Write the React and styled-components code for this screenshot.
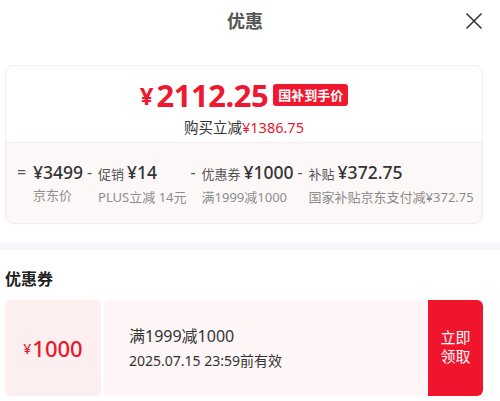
import React from 'react';
import styled, { createGlobalStyle } from 'styled-components';

const GlobalStyle = createGlobalStyle`
  body {
    margin: 0;
    background: #fff;
    font-family: "Noto Sans", "Noto Sans CJK SC", sans-serif;
    color: #333;
  }
`;

const Page = styled.div`
  width: 500px;
  height: 401px;
  overflow: hidden;
`;

const Header = styled.div`
  height: 40px;
  display: flex;
  align-items: center;
  justify-content: center;
  position: relative;
`;

const Title = styled.div`
  font-size: 18px;
  font-weight: 700;
  color: #555;
  margin-left: -10px;
`;

const Close = styled.button`
  position: absolute;
  right: 17px;
  top: 12px;
  width: 18px;
  height: 18px;
  padding: 0;
  border: 0;
  background: none;
  display: flex;
`;

const Section = styled.div`
  padding: 0 17px 0 5px;
`;

const PriceCard = styled.div`
  margin-top: 25px;
  border: 1px solid #eeeeee;
  border-radius: 8px;
  overflow: hidden;
`;

const Top = styled.div`
  padding: 11px 0 5px;
  display: flex;
  flex-direction: column;
  align-items: center;
`;

const PriceLine = styled.div`
  display: flex;
  align-items: center;
  height: 36px;
  color: #f0182e;
  font-weight: 700;
`;

const Yen = styled.span`
  font-size: ${(p) => p.size || 24}px;
  margin-right: ${(p) => p.gap || 3}px;
`;

const Big = styled.span`
  font-size: 31px;
  letter-spacing: -0.5px;
`;

const Badge = styled.span`
  margin-left: 5px;
  background: #f0182e;
  color: #fff;
  font-size: 13px;
  font-weight: 700;
  line-height: 22px;
  padding: 0 5px;
  border-radius: 3px;
`;

const Sub = styled.div`
  margin-top: 4px;
  line-height: 20px;
  font-size: 14.5px;
  color: #333;
`;

const Red = styled.span`
  color: #e8182c;
`;

const Bottom = styled.div`
  background: #fdf8f8;
  border-top: 1px solid #f8ecec;
  padding: 18px 0 17px 11px;
  display: flex;
  gap: 4px;
`;

const Col = styled.div`
  display: flex;
`;

const Op = styled.span`
  width: ${(p) => p.w}px;
  flex-shrink: 0;
  font-size: 16px;
  line-height: 22px;
  color: #555;
`;

const Stack = styled.div`
  display: flex;
  flex-direction: column;
  gap: 3px;
`;

const Value = styled.div`
  line-height: 22px;
  font-size: 17.5px;
  font-weight: 500;
  color: #333;
  white-space: nowrap;
`;

const Tag = styled.span`
  font-size: 13px;
  font-weight: 400;
  color: #555;
  margin-right: 3px;
`;

const Label = styled.div`
  line-height: 18px;
  font-size: 13px;
  color: #8c8c8c;
  white-space: nowrap;
`;

const Band = styled.div`
  margin-top: 18px;
  height: 8px;
  background: #f6f7fb;
`;

const Heading = styled.div`
  margin-top: 18px;
  line-height: 22px;
  font-size: 16px;
  font-weight: 700;
  color: #222;
`;

const Coupon = styled.div`
  margin-top: 10px;
  height: 96px;
  display: flex;
`;

const Amount = styled.div`
  width: 96px;
  background: #fdeef0;
  border-radius: 6px 0 0 6px;
  display: flex;
  align-items: center;
  justify-content: center;
  color: #e8192c;
  font-size: 22px;
  font-weight: 500;
`;

const Divider = styled.div`
  width: 3px;
  position: relative;
  &::before,
  &::after {
    content: "";
    position: absolute;
    left: -2px;
    width: 7px;
    height: 7px;
    border-radius: 50%;
    background: #fff;
  }
  &::before { top: -4px; }
  &::after { bottom: -4px; }
`;

const Info = styled.div`
  flex: 1;
  background: #fdf5f6;
  padding-left: 25px;
  display: flex;
  flex-direction: column;
  justify-content: center;
  gap: 4px;
`;

const Rule = styled.div`
  font-size: 16px;
  line-height: 22px;
  color: #333;
`;

const Expire = styled.div`
  font-size: 14px;
  line-height: 20px;
  color: #333;
`;

const Take = styled.button`
  width: 55px;
  border: 0;
  border-radius: 0 6px 6px 0;
  background: #f0142d;
  color: #fff;
  font-family: "Noto Sans CJK SC", sans-serif;
  font-size: 15px;
  line-height: 19px;
  padding: 0 0 4px;
`;

const parts = [
  { op: '=', w: 16, tag: '', value: '¥3499', label: '京东价' },
  { op: '-', w: 11, tag: '促销', value: '¥14', label: 'PLUS立减 14元' },
  { op: '-', w: 11, tag: '优惠券', value: '¥1000', label: '满1999减1000' },
  { op: '-', w: 11, tag: '补贴', value: '¥372.75', label: '国家补贴京东支付减¥372.75' },
];

export default function App() {
  return (
    <Page>
      <GlobalStyle />
      <Header>
        <Title>优惠</Title>
        <Close aria-label="close">
          <svg width="18" height="18" viewBox="0 0 18 18">
            <path d="M1.5 1.5 L16.5 16.5 M16.5 1.5 L1.5 16.5" stroke="#333" strokeWidth="1.5" fill="none" />
          </svg>
        </Close>
      </Header>
      <Section>
        <PriceCard>
          <Top>
            <PriceLine>
              <Yen>¥</Yen>
              <Big>2112.25</Big>
              <Badge>国补到手价</Badge>
            </PriceLine>
            <Sub>
              购买立减<Red>¥1386.75</Red>
            </Sub>
          </Top>
          <Bottom>
            {parts.map((p) => (
              <Col key={p.label}>
                <Op w={p.w}>{p.op}</Op>
                <Stack>
                  <Value>
                    {p.tag && <Tag>{p.tag}</Tag>}
                    {p.value}
                  </Value>
                  <Label>{p.label}</Label>
                </Stack>
              </Col>
            ))}
          </Bottom>
        </PriceCard>
      </Section>
      <Band />
      <Section>
        <Heading>优惠券</Heading>
        <Coupon>
          <Amount>
            <Yen size={14} gap={1}>¥</Yen>1000
          </Amount>
          <Divider />
          <Info>
            <Rule>满1999减1000</Rule>
            <Expire>2025.07.15 23:59前有效</Expire>
          </Info>
          <Take>
            立即
            <br />
            领取
          </Take>
        </Coupon>
      </Section>
    </Page>
  );
}
